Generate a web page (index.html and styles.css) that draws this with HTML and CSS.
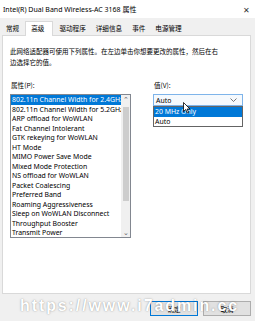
FILE: index.html
```html
<!DOCTYPE html>
<html lang="zh-CN">
<head>
  <meta charset="UTF-8" />
  <meta name="viewport" content="width=device-width, initial-scale=1.0" />
  <title>Intel(R) Dual Band Wireless-AC 3168 属性</title>
  <link rel="stylesheet" href="styles.css">
</head>
<body>
  <div class="dialog">
    <div class="titlebar">
      <span class="title">Intel(R) Dual Band Wireless-AC 3168 属性</span>
      <span class="close">✕</span>
    </div>

    <div class="tabs">
      <span class="tab">常规</span>
      <span class="tab active">高级</span>
      <span class="tab">驱动程序</span>
      <span class="tab">详细信息</span>
      <span class="tab">事件</span>
      <span class="tab">电源管理</span>
    </div>

    <div class="panel">
      <p class="desc">此网络适配器可使用下列属性。在左边单击你想要更改的属性，然后在右边选择它的值。</p>

      <div class="columns">
        <div class="col-left">
          <div class="label">属性(P):</div>
          <div class="listbox">
            <ul class="items">
              <li class="selected">802.11n Channel Width for 2.4GHz</li>
              <li>802.11n Channel Width for 5.2GHz</li>
              <li>ARP offload for WoWLAN</li>
              <li>Fat Channel Intolerant</li>
              <li>GTK rekeying for WoWLAN</li>
              <li>HT Mode</li>
              <li>MIMO Power Save Mode</li>
              <li>Mixed Mode Protection</li>
              <li>NS offload for WoWLAN</li>
              <li>Packet Coalescing</li>
              <li>Preferred Band</li>
              <li>Roaming Aggressiveness</li>
              <li>Sleep on WoWLAN Disconnect</li>
              <li>Throughput Booster</li>
              <li>Transmit Power</li>
            </ul>
            <div class="scrollbar">
              <span class="arrow">&#8963;</span>
              <div class="thumb"></div>
              <span class="arrow down">&#8964;</span>
            </div>
          </div>
        </div>

        <div class="col-right">
          <div class="label">值(V):</div>
          <div class="select">
            <span>Auto</span>
            <svg class="chevron" width="7" height="4" viewBox="0 0 7 4"><path d="M0.5 0.5 L3.5 3.5 L6.5 0.5" fill="none" stroke="#555" stroke-width="0.8"/></svg>
          </div>
          <ul class="dropdown">
            <li class="selected">20 MHz Only</li>
            <li>Auto</li>
          </ul>
          <svg class="cursor" width="8" height="12" viewBox="0 0 8 12"><path d="M0.5 0.5 L0.5 9.5 L2.7 7.5 L4.3 11 L5.6 10.4 L4.1 7 L7 7 Z" fill="#fff" stroke="#000" stroke-width="0.8"/></svg>
        </div>
      </div>
    </div>

    <div class="footer">
      <button class="btn default">确定</button>
      <button class="btn">取消</button>
    </div>

    <div class="watermark">https://www.i7admin.cc</div>
  </div>
</body>
</html>
```

FILE: styles.css
```css
body {
  margin: 0;
  background-color: #f0f0f0;
  font-family: "Noto Sans", "Noto Sans CJK SC", sans-serif;
  color: #000;
}
.dialog {
  position: relative;
  width: 255px;
  height: 321px;
  overflow: hidden;
}
.titlebar {
  height: 18px;
  background-color: #fff;
  display: flex;
  align-items: center;
  justify-content: space-between;
  padding: 0 5px 0 3px;
  font-size: 7px;
}
.close {
  font-size: 8px;
  color: #333;
}
.tabs {
  display: flex;
  margin-top: 4px;
  padding-left: 2px;
  height: 13px;
  font-size: 6.6px;
  font-family: "Noto Sans CJK SC", sans-serif;
}
.tab {
  line-height: 13px;
  padding: 0 4px;
  margin-right: 2px;
}
.tab.active {
  background-color: #fff;
  border: 1px solid #d9d9d9;
  border-bottom: none;
  padding: 0 8px 0 5px;
  margin: -1px 2px 0 0;
  height: 14px;
  position: relative;
  z-index: 1;
}
.panel {
  margin: 0 4px 0 2px;
  height: 259px;
  background-color: #fff;
  border: 1px solid #d9d9d9;
  padding: 10px 7px 0 7px;
  box-sizing: border-box;
}
.desc {
  margin: 0;
  font-family: "Noto Sans CJK SC", sans-serif;
  font-size: 6.5px;
  line-height: 10.5px;
  width: 210px;
}
.columns {
  display: flex;
  margin-top: 13px;
}
.label {
  font-size: 6.6px;
  line-height: 10px;
  font-family: "Noto Sans CJK SC", sans-serif;
  margin-left: 1px;
  margin-bottom: 4px;
}
.col-left {
  width: 121px;
}
.listbox {
  display: flex;
  border: 1px solid #828790;
  height: 144px;
  box-sizing: border-box;
}
.items {
  list-style: none;
  margin: 0;
  padding: 0;
  flex: 1;
  min-width: 0;
  overflow: hidden;
  font-size: 6.9px;
}
.items li,
.dropdown li {
  height: 9.5px;
  line-height: 9.5px;
  padding-left: 1px;
  white-space: nowrap;
  overflow: hidden;
}
.selected {
  background-color: #0078d7;
  color: #fff;
}
.scrollbar {
  width: 9px;
  background-color: #f0f0f0;
  display: flex;
  flex-direction: column;
  align-items: center;
}
.arrow {
  font-size: 7px;
  line-height: 9px;
  height: 9px;
  color: #606060;
}
.thumb {
  width: 6px;
  height: 94px;
  margin-top: 3px;
  background-color: #cdcdcd;
}
.down {
  margin-top: auto;
}
.col-right {
  position: relative;
  margin-left: 22px;
  width: 92px;
}
.select {
  height: 12px;
  border: 1px solid #7eb4ea;
  background-color: #f5f9fd;
  box-sizing: border-box;
  display: flex;
  align-items: center;
  justify-content: space-between;
  padding: 0 5px 0 2px;
  font-size: 6.9px;
}
.dropdown {
  list-style: none;
  margin: 0;
  padding: 0;
  border: 1px solid #646464;
  background-color: #fff;
  font-size: 6.9px;
}
.cursor {
  position: absolute;
  left: 30px;
  top: 22px;
}
.footer {
  display: flex;
  justify-content: flex-end;
  gap: 5px;
  padding: 7px 4px 0 0;
}
.btn {
  width: 48px;
  height: 15px;
  padding: 0;
  background-color: #e1e1e1;
  border: 1px solid #adadad;
  font-family: "Noto Sans CJK SC", sans-serif;
  font-size: 6.6px;
}
.btn.default {
  border-color: #0078d7;
}
.watermark {
  position: absolute;
  left: 20px;
  top: 297px;
  font-family: "Liberation Sans", Arial, sans-serif;
  font-weight: bold;
  font-size: 16px;
  letter-spacing: 1.9px;
  color: #fff;
  text-shadow: 0 0 1px rgba(0, 0, 0, 0.35), 0 0 3px rgba(0, 0, 0, 0.15);
  white-space: nowrap;
}
```
